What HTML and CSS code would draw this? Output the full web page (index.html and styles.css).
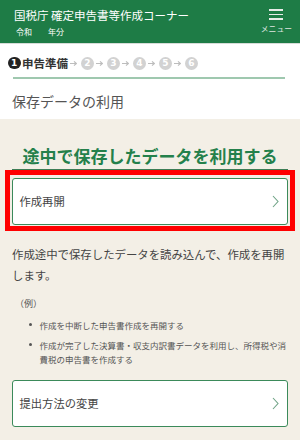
FILE: index.html
```html
<!DOCTYPE html>
<html lang="ja">
<head>
<meta charset="utf-8">
<title>保存データの利用</title>
<link rel="stylesheet" href="styles.css">
</head>
<body>
<header class="header">
  <div class="brand">
    <div class="brand-title">国税庁 確定申告書等作成コーナー</div>
    <div class="brand-sub">令和　　年分</div>
  </div>
  <div class="menu">
    <div class="burger"><span></span><span></span><span></span></div>
    <div class="menu-label">メニュー</div>
  </div>
</header>
<section class="top">
  <div class="steps">
    <span class="num num-active">1</span><span class="step-label">申告準備</span>
    <svg class="arrow" width="7" height="7" viewBox="0 0 7 7"><path d="M0 3.5H6.3M4 1.3L6.4 3.5L4 5.7" fill="none" stroke="#bdbdbd" stroke-width="1.1"/></svg><span class="num">2</span>
    <svg class="arrow" width="7" height="7" viewBox="0 0 7 7"><path d="M0 3.5H6.3M4 1.3L6.4 3.5L4 5.7" fill="none" stroke="#bdbdbd" stroke-width="1.1"/></svg><span class="num">3</span>
    <svg class="arrow" width="7" height="7" viewBox="0 0 7 7"><path d="M0 3.5H6.3M4 1.3L6.4 3.5L4 5.7" fill="none" stroke="#bdbdbd" stroke-width="1.1"/></svg><span class="num">4</span>
    <svg class="arrow" width="7" height="7" viewBox="0 0 7 7"><path d="M0 3.5H6.3M4 1.3L6.4 3.5L4 5.7" fill="none" stroke="#bdbdbd" stroke-width="1.1"/></svg><span class="num">5</span>
    <svg class="arrow" width="7" height="7" viewBox="0 0 7 7"><path d="M0 3.5H6.3M4 1.3L6.4 3.5L4 5.7" fill="none" stroke="#bdbdbd" stroke-width="1.1"/></svg><span class="num">6</span>
  </div>
  <div class="steps-rule"></div>
  <h1 class="page-title">保存データの利用</h1>
</section>
<main class="content">
  <h2 class="heading">途中で保存したデータを利用する</h2>
  <div class="btn-wrap">
    <a class="btn" href="#"><span>作成再開</span>
      <svg class="chev" width="7" height="13" viewBox="0 0 7 13"><polyline points="1,1 6,6.5 1,12" fill="none" stroke="#6fa386" stroke-width="1.1"/></svg>
    </a>
    <span class="highlight"></span>
  </div>
  <p class="desc">作成途中で保存したデータを読み込んで、作成を再開します。</p>
  <p class="example">（例）</p>
  <ul class="list">
    <li>作成を中断した申告書作成を再開する</li>
    <li>作成が完了した決算書・収支内訳書データを利用し、所得税や消費税の申告書を作成する</li>
  </ul>
  <a class="btn btn-second" href="#"><span>提出方法の変更</span>
    <svg class="chev" width="7" height="13" viewBox="0 0 7 13"><polyline points="1,1 6,6.5 1,12" fill="none" stroke="#6fa386" stroke-width="1.1"/></svg>
  </a>
</main>
</body>
</html>
```

FILE: styles.css
```css
* { box-sizing: border-box; }
html, body { margin: 0; padding: 0; }
body {
  background: #f3efe6;
  font-family: "Noto Sans CJK JP", "Noto Sans", sans-serif;
  color: #444;
  width: 300px;
  overflow: hidden;
}
.header {
  height: 44px;
  background: #1e7c46;
  border-bottom: 1px solid #d6dcd8;
  display: flex;
  justify-content: space-between;
  padding: 0 8px 0 14px;
}
.brand { padding-top: 8px; }
.brand-title {
  color: #fff;
  font-size: 11.5px;
  line-height: 14px;
  white-space: nowrap;
}
.brand-sub {
  color: #fff;
  font-size: 8px;
  line-height: 10px;
  margin-top: 5px;
  padding-left: 2px;
  white-space: pre;
}
.menu {
  display: flex;
  flex-direction: column;
  align-items: center;
  padding-top: 9px;
}
.burger {
  display: flex;
  flex-direction: column;
  gap: 3px;
  width: 14px;
}
.burger span {
  display: block;
  height: 1.6px;
  background: #e8ece9;
}
.menu-label {
  color: #dfe6e1;
  font-size: 7.8px;
  line-height: 10px;
  margin-top: 4px;
  white-space: nowrap;
}
.top {
  background: #fff;
  padding: 12px 0 8px 8px;
}
.steps {
  display: flex;
  align-items: center;
  height: 14px;
}
.num {
  width: 13px;
  height: 13px;
  border-radius: 50%;
  background: #d2d2d2;
  color: #fff;
  font-family: "DejaVu Sans", sans-serif;
  font-weight: bold;
  font-size: 9px;
  display: inline-flex;
  align-items: center;
  justify-content: center;
  flex: 0 0 13px;
}
.num-active { background: #222; width: 12.5px; height: 12.5px; flex-basis: 12.5px; }
.step-label {
  font-weight: bold;
  font-size: 11.5px;
  color: #333;
  margin-left: 1.5px;
  line-height: 14px;
}
.arrow { margin: 0 4px 0 2px; flex: 0 0 7px; }
.steps-rule {
  height: 1.5px;
  background: #9fc8af;
  margin: 7px 15px 0 5px;
}
.page-title {
  margin: 12px 0 0 4px;
  font-size: 14px;
  line-height: 20px;
  font-weight: normal;
  color: #555;
}
.content {
  padding: 26px 12px 20px;
}
.heading {
  margin: 0;
  text-align: center;
  color: #24804b;
  font-size: 17px;
  line-height: 22px;
  font-weight: bold;
  padding-bottom: 2px;
  border-bottom: 2px solid #3d7d55;
}
.btn-wrap {
  position: relative;
  margin-top: 7px;
}
.btn {
  display: flex;
  justify-content: space-between;
  align-items: center;
  height: 47px;
  background: #fff;
  border: 1.5px solid #3b8a5a;
  border-radius: 3px;
  padding: 0 7.8px 0 6.5px;
  text-decoration: none;
  color: #444;
  font-size: 11.3px;
}
.highlight {
  position: absolute;
  top: -8px;
  left: -7px;
  right: -7px;
  bottom: -6px;
  border: 5px solid #ff0000;
  pointer-events: none;
}
.desc {
  margin: 19px 0 0;
  font-size: 11.4px;
  line-height: 21px;
  color: #444;
}
.example {
  margin: 11px 0 0 3px;
  font-size: 9px;
  line-height: 14px;
  color: #555;
}
.list {
  list-style: none;
  margin: 7px 0 0;
  padding: 0;
}
.list li {
  display: flex;
  gap: 7.5px;
  margin-left: 17px;
  font-size: 8.5px;
  line-height: 14px;
  color: #555;
}
.list li + li { margin-top: 6px; }
.list li::before {
  content: "";
  flex: 0 0 3px;
  height: 3px;
  border-radius: 50%;
  background: #555;
  margin-top: 5.5px;
}
.btn-second {
  margin-top: 14px;
}
```
